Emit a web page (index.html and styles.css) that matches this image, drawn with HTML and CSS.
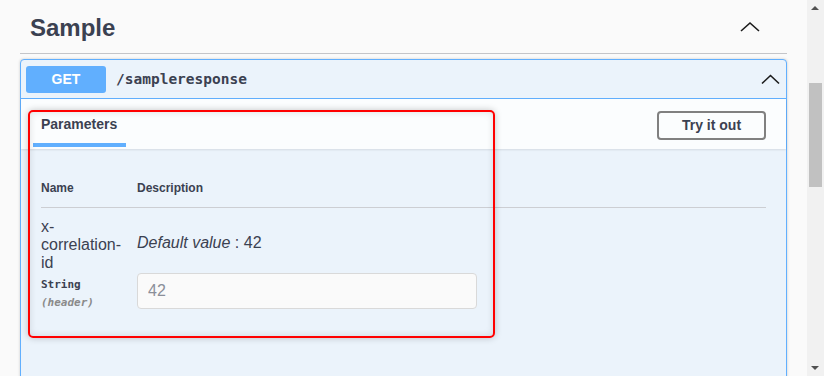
FILE: index.html
```html
<!DOCTYPE html>
<html lang="en">
<head>
<meta charset="UTF-8">
<meta name="viewport" content="width=device-width, initial-scale=1.0">
<title>Sample - Swagger UI</title>
<link rel="stylesheet" href="styles.css">
</head>
<body>
<div class="page">
  <div class="wrapper">
    <div class="opblock-tag">
      <span class="tag-name">Sample</span>
      <svg class="arrow tag-arrow" width="20" height="12" viewBox="0 0 20 12"><polyline points="1,10 10,2 19,10" /></svg>
    </div>

    <div class="opblock">
      <div class="opblock-summary">
        <span class="method">GET</span>
        <span class="path">/sampleresponse</span>
        <svg class="arrow summary-arrow" width="19" height="11" viewBox="0 0 19 11"><polyline points="1,9.5 9.5,1.5 18,9.5" /></svg>
      </div>

      <div class="section-header">
        <div class="tab-item"><h4>Parameters</h4></div>
        <button class="try-out">Try it out</button>
      </div>

      <div class="table-container">
        <table class="parameters">
          <thead>
            <tr>
              <th class="col-name">Name</th>
              <th>Description</th>
            </tr>
          </thead>
          <tbody>
            <tr>
              <td class="col-name">
                <div class="param-name">x-correlation-id</div>
                <div class="param-type">String</div>
                <div class="param-in">(header)</div>
              </td>
              <td>
                <div class="markdown"><i>Default value</i> : 42</div>
                <input type="text" class="param-input" placeholder="42">
              </td>
            </tr>
          </tbody>
        </table>
      </div>

      <!-- highlight box drawn over the parameters panel -->
      <div class="highlight"></div>
    </div>
  </div>

  <div class="scrollbar">
    <span class="sb-up"></span>
    <span class="sb-thumb"></span>
    <span class="sb-down"></span>
  </div>
</div>
</body>
</html>
```

FILE: styles.css
```css
  body {
      margin: 0;
      background-color: #fafafa;
      font-family: "Liberation Sans", Arial, sans-serif;
      color: #3b4151;
      overflow: hidden;
  }

  .page {
      display: flex;
      height: 376px;
      overflow: hidden;
  }

  .wrapper {
      flex: 1;
      padding: 0 20px;
  }

  /* tag header */
  .opblock-tag {
      display: flex;
      align-items: center;
      box-sizing: border-box;
      height: 54px;
      padding: 0 27px 0 10px;
      border-bottom: 1px solid #c4c5c9;
  }

  .tag-name {
      flex: 1;
      font-size: 24px;
      font-weight: bold;
      margin-top: 2px;
  }

  .arrow polyline {
      fill: none;
      stroke: #1b1b1b;
      stroke-width: 1.6;
  }

  .tag-arrow {
      margin-top: 1px;
  }

  /* operation block */
  .opblock {
      position: relative;
      margin-top: 5px;
      height: 330px;
      border: 1px solid #61affe;
      border-radius: 4px;
      background-color: #ebf3fb;
      box-shadow: 0 0 3px rgba(0, 0, 0, 0.19);
  }

  .opblock-summary {
      display: flex;
      align-items: center;
      height: 38px;
      padding: 0 6px 0 5px;
      border-bottom: 1px solid #61affe;
  }

  .method {
      width: 80px;
      height: 27px;
      line-height: 27px;
      text-align: center;
      border-radius: 3px;
      background-color: #61affe;
      color: #fff;
      font-size: 14px;
      font-weight: bold;
  }

  .path {
      flex: 1;
      padding: 0 10px;
      font-family: "DejaVu Sans Mono", monospace;
      font-size: 14.5px;
      font-weight: bold;
  }

  .summary-arrow {
      margin-top: 1px;
  }

  .section-header {
      display: flex;
      align-items: center;
      justify-content: space-between;
      height: 50px;
      padding: 0 20px 0 20px;
      background-color: rgba(255, 255, 255, 0.8);
      box-shadow: 0 1px 2px rgba(0, 0, 0, 0.1);
  }

  .tab-item {
      position: relative;
      align-self: stretch;
      display: flex;
      align-items: center;
  }

  .tab-item h4 {
      margin: 0 0 1px 0;
      font-size: 14px;
      font-weight: bold;
  }

  .tab-item:after {
      content: "";
      position: absolute;
      left: -8px;
      right: -9px;
      bottom: 2px;
      height: 4px;
      background-color: #61affe;
  }

  .try-out {
      width: 109px;
      height: 29px;
      margin-top: 2px;
      border: 2px solid #808080;
      border-radius: 4px;
      background-color: transparent;
      color: #3b4151;
      font-family: "Liberation Sans", Arial, sans-serif;
      font-size: 14px;
      font-weight: bold;
      padding: 0;
  }

  /* parameters table */
  .table-container {
      padding: 20px;
  }

  .parameters {
      width: 100%;
      border-collapse: collapse;
  }

  .parameters th {
      height: 38px;
      padding: 0;
      text-align: left;
      font-size: 12px;
      font-weight: bold;
      border-bottom: 1px solid #ccced3;
  }

  .parameters td {
      padding: 10px 10px 10px 0;
      vertical-align: top;
  }

  .col-name {
      width: 86px;
  }

  .param-name {
      font-size: 16px;
      line-height: 18px;
  }

  .param-type {
      padding: 6px 0 5px 0;
      font-family: "DejaVu Sans Mono", monospace;
      font-size: 11px;
      font-weight: bold;
  }

  .param-in {
      font-family: "DejaVu Sans Mono", monospace;
      font-size: 11px;
      font-style: italic;
      font-weight: bold;
      color: #8a8a8a;
  }

  .markdown {
      margin: 16px 0 21px 0;
      font-size: 16px;
  }

  .param-input {
      display: block;
      box-sizing: border-box;
      width: 340px;
      height: 36px;
      padding: 0 10px;
      border: 1px solid #d9d9d9;
      border-radius: 4px;
      background-color: #fafafa;
      font-family: "Liberation Sans", Arial, sans-serif;
      font-size: 16px;
      color: #3b4151;
  }

  .param-input::placeholder {
      color: #8a8f99;
  }

  .highlight {
      position: absolute;
      left: 7px;
      top: 50px;
      width: 467px;
      height: 228px;
      box-sizing: border-box;
      border: 2px solid #ff0000;
      border-radius: 5px;
      box-shadow: 0 0 7px rgba(0, 0, 0, 0.22), inset 0 0 7px rgba(0, 0, 0, 0.12);
  }

  /* fake scrollbar */
  .scrollbar {
      position: relative;
      width: 17px;
      background-color: #f1f1f1;
  }

  .sb-thumb {
      position: absolute;
      left: 2px;
      top: 83px;
      width: 13px;
      height: 104px;
      background-color: #c1c1c1;
  }

  .sb-up,
  .sb-down {
      position: absolute;
      left: 4px;
      width: 0;
      height: 0;
      border-left: 4px solid transparent;
      border-right: 4px solid transparent;
  }

  .sb-up {
      top: 6px;
      border-bottom: 4px solid #505050;
  }

  .sb-down {
      bottom: 6px;
      border-top: 4px solid #505050;
  }
```
